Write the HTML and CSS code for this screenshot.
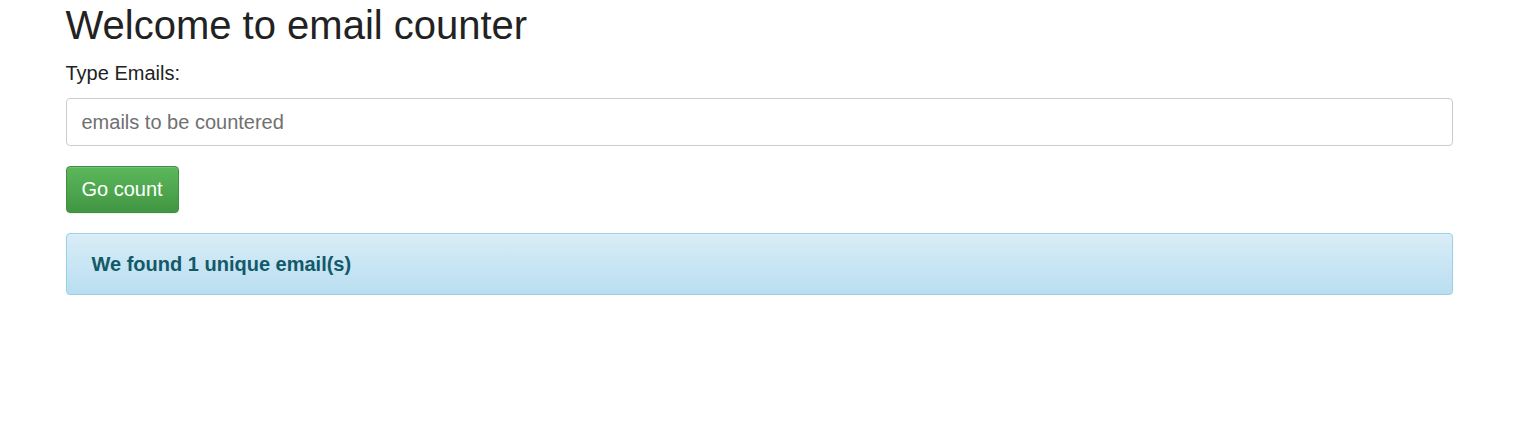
FILE: index.html
```html
<!DOCTYPE html>
<html>
<head>
<meta charset="utf-8">
<link rel="stylesheet" href="styles.css">
</head>
<body>
<div class="container">
  <h1 class="title">Welcome to email counter</h1>
  <form class="form">
    <label class="label" for="emails">Type Emails:</label>
    <input class="input" id="emails" type="text" placeholder="emails to be countered">
    <button class="btn" type="button">Go count</button>
  </form>
  <div class="alert">We found 1 unique email(s)</div>
</div>
</body>
</html>
```
FILE: styles.css
```css
html, body { margin: 0; padding: 0; background: #fff; }
body { font-family: "Liberation Sans", Arial, sans-serif; color: #222; font-size: 18px; }
.container { width: 1389px; margin: 0 auto; padding-left: 2px; box-sizing: border-box; }
.title { font-size: 40px; font-weight: 400; line-height: 1.1; margin: 3px 0 14px; color: #222; }
.form { display: flex; flex-direction: column; align-items: flex-start; }
.label { font-size: 20px; line-height: 24px; margin-bottom: 13px; }
.input { width: 100%; box-sizing: border-box; height: 48px; padding: 10px 15px; font-size: 20px; font-family: inherit; border: 1px solid #ccc; border-radius: 4px; color: #555; outline: none; margin-bottom: 20px; }
.input::placeholder { color: #707070; }
.btn { height: 47px; padding: 0 15px; font-size: 20px; font-family: inherit; color: #fff; border: 1px solid #3e8f3e; border-radius: 4px; background: linear-gradient(to bottom, #5cb85c 0%, #419641 100%); box-shadow: inset 0 1px 0 rgba(255,255,255,.15), 0 1px 1px rgba(0,0,0,.075); margin-bottom: 20px; }
.alert { box-sizing: border-box; height: 62px; padding: 0 25px; display: flex; align-items: center; font-size: 20px; font-weight: 700; color: #12596a; border: 1px solid #9acfea; border-radius: 4px; background: linear-gradient(to bottom, #d9edf7 0%, #b9def0 100%); box-shadow: inset 0 1px 0 rgba(255,255,255,.25), 0 1px 2px rgba(0,0,0,.05); }
```
